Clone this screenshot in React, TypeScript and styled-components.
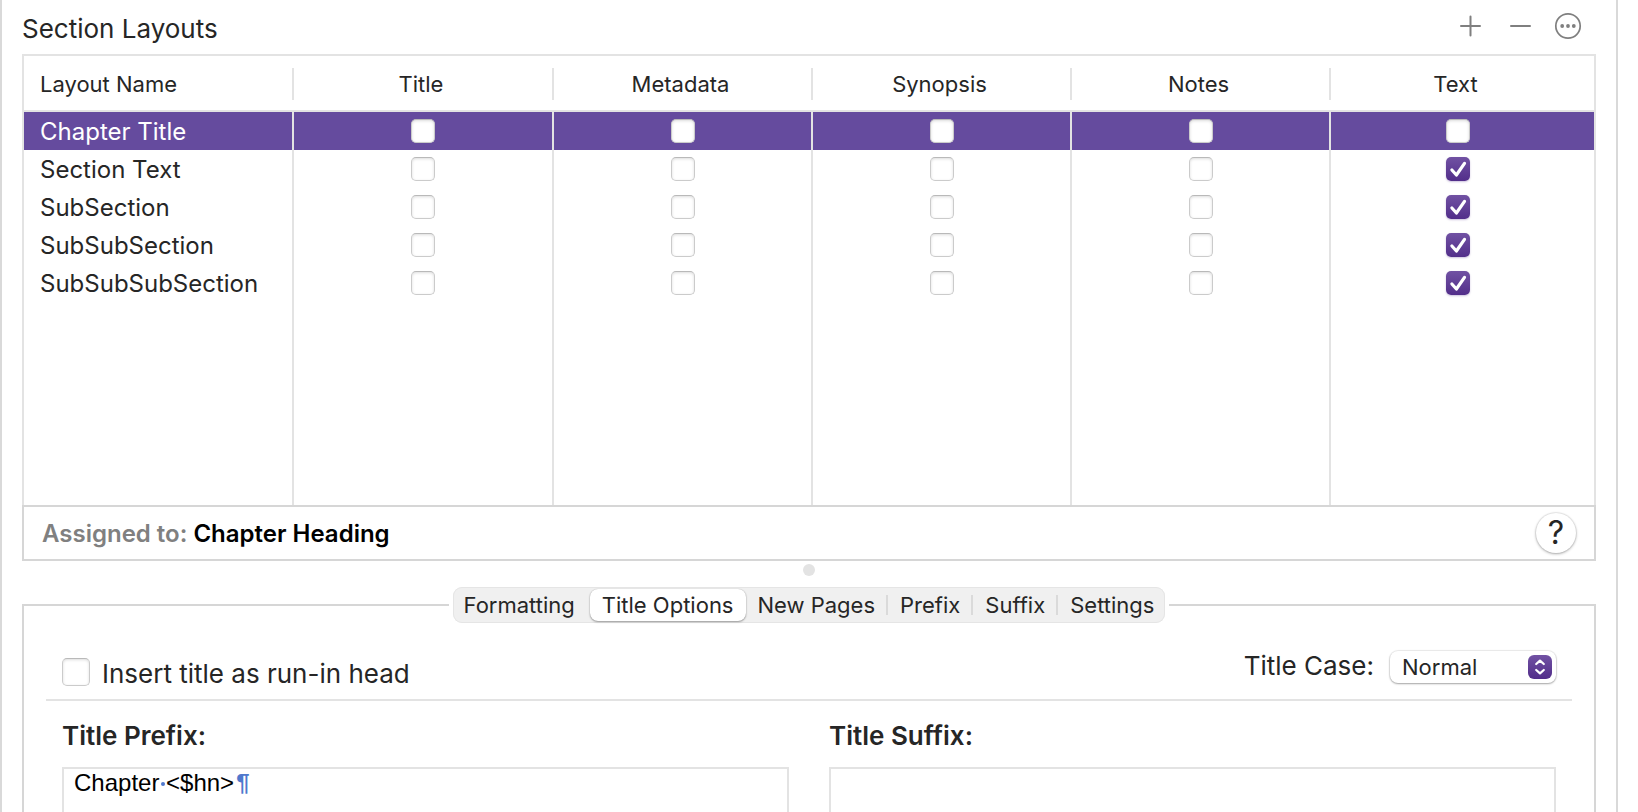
import React, { useState } from "react";
import styled, { createGlobalStyle } from "styled-components";

const GlobalStyle = createGlobalStyle`
  *, *::before, *::after { box-sizing: border-box; }
  body {
    margin: 0;
    background: #ffffff;
    color: #262626;
    font-family: Inter, "Liberation Sans", sans-serif;
  }
  button, select, input, textarea { font: inherit; color: inherit; }
`;

const Pane = styled.main`
  height: 100vh;
  margin-right: 20px;
  padding: 0 20px;
  overflow: hidden;
  border: solid #d9d9d9;
  border-width: 0 2px;
`;

const PaneHeader = styled.header`
  display: flex;
  align-items: center;
  justify-content: space-between;
  height: 54px;
`;

const PaneTitle = styled.h1`
  margin: 0;
  padding-top: 4px;
  font-size: 26px;
  line-height: 32px;
  font-weight: 400;
`;

const Actions = styled.div`
  display: flex;
  gap: 21px;
  padding: 0 14px 2px 0;
`;

const IconButton = styled.button`
  display: grid;
  place-items: center;
  width: 28px;
  height: 28px;
  padding: 0;
  border: 0;
  background: none;
  color: #7f7f7f;
`;

const LayoutTable = styled.table`
  width: 100%;
  table-layout: fixed;
  border-collapse: separate;
  border-spacing: 0;
  border: solid #e3e3e3;
  border-width: 2px 2px 0;
`;

const Col = styled.col<{ $width?: number }>`
  width: ${(p) => (p.$width ? `${p.$width}px` : "auto")};
`;

const HeadCell = styled.th<{ $align?: string }>`
  height: 56px;
  padding: 12px 0 10px;
  border-bottom: 2px solid #e3e3e3;
  font-size: 22px;
  line-height: 32px;
  font-weight: 400;
  text-align: ${(p) => p.$align || "center"};

  > span {
    display: block;
    padding: ${(p) => (p.$align ? "0 0 0 16px" : "0 4px 0 0")};
    border-right: 2px solid #e3e3e3;
  }
  &:last-child > span {
    padding-right: 14px;
    border-right: 0;
  }
`;

const Row = styled.tr<{ $selected?: boolean }>`
  background: ${(p) => (p.$selected ? "#654b9e" : "transparent")};
  color: ${(p) => (p.$selected ? "#ffffff" : "#262626")};
`;

const NameCell = styled.th`
  height: 38px;
  padding: 2px 0 0 16px;
  border-right: 2px solid #e3e3e3;
  font-size: 24px;
  line-height: 36px;
  font-weight: 400;
  text-align: left;
  white-space: nowrap;
`;

const CheckCell = styled.td`
  height: 38px;
  padding: 0;
  border-right: 2px solid #e3e3e3;

  &:last-child {
    padding-right: 9px;
    border-right: 0;
  }
`;

const FillerCell = styled.td`
  height: 203px;
  padding: 0;
  border-right: 2px solid #e3e3e3;

  &:last-child { border-right: 0; }
`;

const CheckFrame = styled.span<{ $size: number }>`
  display: grid;
  width: ${(p) => p.$size}px;
  height: ${(p) => p.$size}px;
  margin: 0 auto;

  > * { grid-area: 1 / 1; }
  > svg { pointer-events: none; }
`;

const CheckInput = styled.input`
  appearance: none;
  width: 100%;
  height: 100%;
  margin: 0;
  border: 1px solid #cbcbcb;
  border-top-color: #b9b9b9;
  border-radius: 5px;
  background: #ffffff;
  box-shadow: inset 0 1px 3px rgba(0, 0, 0, 0.14);

  &:checked {
    border: 0;
    background: linear-gradient(#7152a3, #522e8a);
    box-shadow: 0 1px 2px rgba(82, 46, 138, 0.3);
  }
`;

const AssignedBar = styled.footer`
  display: flex;
  align-items: center;
  justify-content: space-between;
  height: 56px;
  padding: 0 18px;
  border: 2px solid #d6d6d6;
  font-size: 24px;
  line-height: 32px;
  font-weight: 600;
  color: #000000;
`;

const Assignment = styled.p`
  margin: 0;
  padding-top: 2px;
`;

const Muted = styled.span`
  color: #808080;
`;

const HelpButton = styled.button`
  width: 40px;
  height: 40px;
  padding: 0;
  border: 0;
  border-radius: 50%;
  background: #ffffff;
  box-shadow: 0 0 1px 1px rgba(0, 0, 0, 0.07), 0 1px 3px rgba(0, 0, 0, 0.3);
  color: #262626;
  font-size: 32px;
  line-height: 40px;
  font-weight: 400;
`;

const Splitter = styled.div`
  display: grid;
  justify-content: center;
  height: 26px;
  padding-top: 3px;

  &::before {
    content: "";
    width: 12px;
    height: 12px;
    border-radius: 50%;
    background: #e3e3e3;
  }
`;

const OptionsPanel = styled.fieldset`
  min-width: 0;
  margin: 0;
  padding: 0 22px;
  border: 2px solid #d6d6d6;
`;

const TabLegend = styled.legend`
  margin: 0 auto;
  padding: 0 4px;
`;

const TabBar = styled.div`
  display: flex;
  align-items: center;
  height: 36px;
  padding: 0 1px;
  border-radius: 9px;
  background: #f0f0f0;
  box-shadow: inset 0 0 0 1px #e5e5e5;
`;

const Tab = styled.button<{ $active?: boolean; $divided?: boolean }>`
  display: flex;
  align-items: center;
  height: 32px;
  padding: 0 ${(p) => (p.$divided ? 0 : 12)}px 0 12px;
  border: 0;
  border-radius: 8px;
  background: ${(p) => (p.$active ? "#ffffff" : "transparent")};
  box-shadow: ${(p) =>
    p.$active ? "0 0 1px rgba(0,0,0,.25), 0 1px 2px rgba(0,0,0,.35)" : "none"};
  font-size: 22px;
  line-height: 32px;
  white-space: nowrap;

  &:first-child { padding: 0 15px 0 10px; }
  &:last-child { padding-right: 10px; }
  &::after {
    content: "";
    display: ${(p) => (p.$divided ? "block" : "none")};
    width: 2px;
    height: 20px;
    margin-left: 11px;
    background: #dadada;
  }
`;

const OptionsRow = styled.div`
  display: flex;
  align-items: flex-end;
  justify-content: space-between;
  padding: 27px 16px 10px;
  border-bottom: 2px solid #e3e3e3;
  font-size: 26px;
  line-height: 34px;
`;

const CheckLabel = styled.label`
  display: flex;
  align-items: center;
  gap: 12px;
  height: 34px;
`;

const CheckText = styled.span`
  padding-top: 4px;
`;

const SelectGroup = styled.div`
  display: flex;
  align-items: center;
  gap: 16px;
  height: 39px;
  padding-bottom: 5px;
`;

const SelectLabel = styled.label`
  padding-bottom: 2px;
`;

const SelectFrame = styled.span`
  position: relative;
  display: block;
  width: 166px;
`;

const Select = styled.select`
  display: block;
  appearance: none;
  width: 100%;
  height: 32px;
  padding: 0 36px 0 12px;
  border: 0;
  border-radius: 8px;
  background: #ffffff;
  box-shadow: 0 0 1px 1px rgba(0, 0, 0, 0.08), 0 1px 2px rgba(0, 0, 0, 0.3);
  font-size: 22px;
  line-height: 32px;
`;

const SelectArrows = styled.svg`
  position: absolute;
  top: 4px;
  right: 4px;
  border-radius: 6px;
  background: linear-gradient(#7152a3, #522e8a);
  pointer-events: none;
`;

const Editors = styled.div`
  display: grid;
  grid-template-columns: 1fr 1fr;
  gap: 40px;
  padding: 20px 16px;
`;

const EditorLabel = styled.label`
  display: block;
  margin-bottom: 16px;
  font-size: 26px;
  line-height: 30px;
  font-weight: 600;
`;

const EditorFrame = styled.div`
  position: relative;
  height: 160px;
  border: 2px solid #e3e3e3;
  color: #000000;
  font-family: "Liberation Sans", Arial, sans-serif;
  font-size: 24px;
  line-height: 28px;
`;

const EditorInput = styled.textarea`
  display: block;
  width: 100%;
  height: 100%;
  padding: 0 10px;
  border: 0;
  outline: 0;
  resize: none;
  background: transparent;
`;

const MarkLayer = styled.div`
  position: absolute;
  inset: 0;
  padding: 0 10px;
  color: #4f78cd;
  white-space: pre-wrap;
  pointer-events: none;
`;

const Ghost = styled.span`
  visibility: hidden;
`;

const EndMark = styled.span`
  margin-left: 2px;
  font-weight: 700;
`;

const SpaceMark = styled.span`
  position: relative;

  &::after {
    content: "";
    position: absolute;
    top: 50%;
    left: 50%;
    width: 4px;
    height: 4px;
    margin: -1px 0 0 -2px;
    border-radius: 50%;
    background: currentColor;
  }
`;

function Checkbox({
  label,
  id,
  size = 24,
  initial = false,
}: {
  label?: string;
  id?: string;
  size?: number;
  initial?: boolean;
}) {
  const [on, setOn] = useState(initial);
  return (
    <CheckFrame $size={size}>
      <CheckInput
        type="checkbox"
        id={id}
        aria-label={label}
        checked={on}
        onChange={(e) => setOn(e.target.checked)}
      />
      {on && (
        <svg width={size} height={size} viewBox="0 0 24 24" fill="none" aria-hidden="true">
          <path
            d="M5.9 13 10.4 18 18.5 6.4"
            stroke="#fff"
            strokeWidth="3.2"
            strokeLinecap="round"
            strokeLinejoin="round"
          />
        </svg>
      )}
    </CheckFrame>
  );
}

/* Shows formatting marks over the plain text: a dot for each space and a pilcrow at the end. */
function FormattingMarks({ text }: { text: string }) {
  return (
    <MarkLayer aria-hidden="true">
      {text.split(" ").map((word, i) => (
        <React.Fragment key={i}>
          {i > 0 && <SpaceMark> </SpaceMark>}
          <Ghost>{word}</Ghost>
        </React.Fragment>
      ))}
      <EndMark>¶</EndMark>
    </MarkLayer>
  );
}

function Editor({ id, label, initial }: { id: string; label: string; initial: string }) {
  const [value, setValue] = useState(initial);
  return (
    <div>
      <EditorLabel htmlFor={id}>{label}</EditorLabel>
      <EditorFrame>
        <EditorInput id={id} value={value} onChange={(e) => setValue(e.target.value)} />
        {value && <FormattingMarks text={value} />}
      </EditorFrame>
    </div>
  );
}

const columns = ["Title", "Metadata", "Synopsis", "Notes", "Text"];
const layouts = [
  { name: "Chapter Title", text: false },
  { name: "Section Text", text: true },
  { name: "SubSection", text: true },
  { name: "SubSubSection", text: true },
  { name: "SubSubSubSection", text: true },
];
const tabs = [
  { name: "Formatting" },
  { name: "Title Options" },
  { name: "New Pages", divided: true },
  { name: "Prefix", divided: true },
  { name: "Suffix", divided: true },
  { name: "Settings" },
];

export default function App() {
  const [tab, setTab] = useState("Title Options");
  const [selected, setSelected] = useState("Chapter Title");

  return (
    <>
      <GlobalStyle />
      <Pane>
        <PaneHeader>
          <PaneTitle>Section Layouts</PaneTitle>
          <Actions>
            <IconButton aria-label="Add layout">
              <svg width="28" height="28" viewBox="0 0 28 28" fill="none" stroke="currentColor" strokeWidth="2" strokeLinecap="round">
                <path d="M14.5 4.5v19M5 14h19" />
              </svg>
            </IconButton>
            <IconButton aria-label="Remove layout">
              <svg width="28" height="28" viewBox="0 0 28 28" fill="none" stroke="currentColor" strokeWidth="2" strokeLinecap="round">
                <path d="M6 14h19" />
              </svg>
            </IconButton>
            <IconButton aria-label="More actions">
              <svg width="28" height="28" viewBox="0 0 28 28" fill="none">
                <circle cx="14" cy="14" r="12.2" stroke="currentColor" strokeWidth="1.7" />
                <g fill="currentColor">
                  <circle cx="8.2" cy="14" r="1.9" />
                  <circle cx="14" cy="14" r="1.9" />
                  <circle cx="19.8" cy="14" r="1.9" />
                </g>
              </svg>
            </IconButton>
          </Actions>
        </PaneHeader>

        <LayoutTable>
          <colgroup>
            <Col $width={270} />
            <Col $width={260} />
            <Col />
            <Col />
            <Col />
            <Col $width={263} />
          </colgroup>
          <thead>
            <tr>
              <HeadCell scope="col" $align="left">
                <span>Layout Name</span>
              </HeadCell>
              {columns.map((c) => (
                <HeadCell scope="col" key={c}>
                  <span>{c}</span>
                </HeadCell>
              ))}
            </tr>
          </thead>
          <tbody>
            {layouts.map((l) => (
              <Row key={l.name} $selected={l.name === selected} onClick={() => setSelected(l.name)}>
                <NameCell scope="row">{l.name}</NameCell>
                {columns.map((c) => (
                  <CheckCell key={c}>
                    <Checkbox label={`${l.name}: ${c}`} initial={c === "Text" && l.text} />
                  </CheckCell>
                ))}
              </Row>
            ))}
            <tr aria-hidden="true">
              <FillerCell />
              {columns.map((c) => (
                <FillerCell key={c} />
              ))}
            </tr>
          </tbody>
        </LayoutTable>

        <AssignedBar>
          <Assignment>
            <Muted>Assigned to:</Muted> Chapter Heading
          </Assignment>
          <HelpButton aria-label="Help">?</HelpButton>
        </AssignedBar>

        <Splitter />

        <OptionsPanel>
          <TabLegend>
            <TabBar role="tablist">
              {tabs.map((t) => (
                <Tab
                  key={t.name}
                  type="button"
                  role="tab"
                  aria-selected={t.name === tab}
                  $active={t.name === tab}
                  $divided={t.divided}
                  onClick={() => setTab(t.name)}
                >
                  {t.name}
                </Tab>
              ))}
            </TabBar>
          </TabLegend>

          <OptionsRow>
            <CheckLabel htmlFor="run-in">
              <Checkbox id="run-in" size={28} />
              <CheckText>Insert title as run-in head</CheckText>
            </CheckLabel>
            <SelectGroup>
              <SelectLabel htmlFor="title-case">Title Case:</SelectLabel>
              <SelectFrame>
                <Select id="title-case" defaultValue="Normal">
                  <option>Normal</option>
                  <option>Uppercase</option>
                  <option>Lowercase</option>
                </Select>
                <SelectArrows width="24" height="24" viewBox="0 0 24 24" fill="none" aria-hidden="true">
                  <path
                    d="M8.2 9 12 5.6 15.8 9M8.2 15 12 18.4 15.8 15"
                    stroke="#fff"
                    strokeWidth="2.2"
                    strokeLinecap="round"
                    strokeLinejoin="round"
                  />
                </SelectArrows>
              </SelectFrame>
            </SelectGroup>
          </OptionsRow>

          <Editors>
            <Editor id="title-prefix" label="Title Prefix:" initial="Chapter <$hn>" />
            <Editor id="title-suffix" label="Title Suffix:" initial="" />
          </Editors>
        </OptionsPanel>
      </Pane>
    </>
  );
}
